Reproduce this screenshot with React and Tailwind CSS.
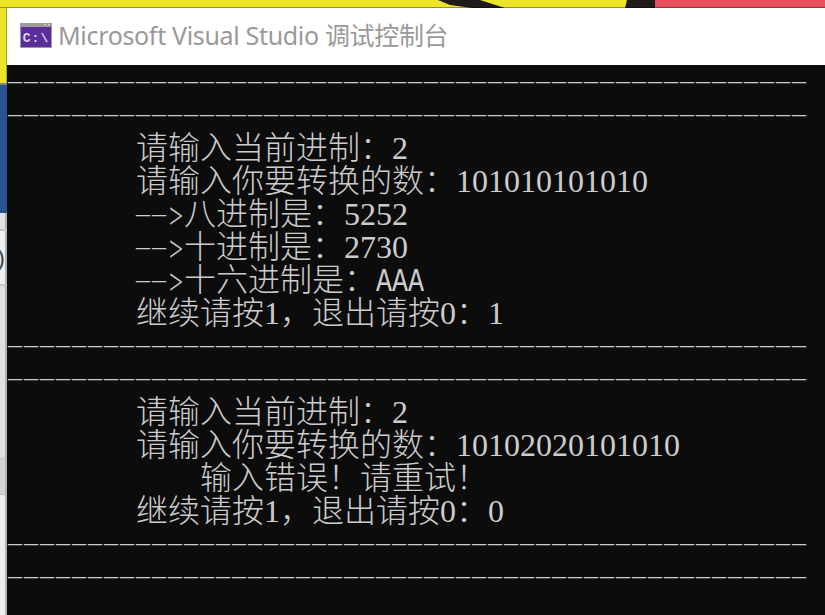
import React from "react";

const cjk = "font-['Liberation_Serif','Noto_Sans_CJK_SC',serif]";

// one row of the console, always 33px high
function Row({ children, indent }) {
    return (
        <div className={`h-[33px] leading-[35px] whitespace-pre text-[32px] font-light ${cjk} ${indent ? "pl-[128px]" : ""}`}>
            {children}
        </div>
    );
}

// dashes are a fixed 16px cell, as in the console font
function Dashes({ count }) {
    return (
        <span className="font-['Liberation_Serif',serif] text-[28px] tracking-[2px] font-normal">
            {"–".repeat(count)}
        </span>
    );
}

// the arrow head is taller and narrower than any installed font draws it
function Arrow() {
    return (
        <>
            <span className="inline-block w-[32px] leading-none relative -top-[3px]">
                <Dashes count={2} />
            </span>
            <span className="inline-block w-[16px] leading-none text-center font-['Liberation_Serif',serif] text-[25px] font-normal scale-y-[1.4] origin-center">
                &gt;
            </span>
        </>
    );
}

function Letters({ children }) {
    return (
        <span className="inline-block leading-none origin-[50%_70%] scale-y-125 font-['Liberation_Mono',monospace] text-[26.67px] font-normal">
            {children}
        </span>
    );
}

function Rule() {
    return (
        <div className={`h-[33px] leading-[27px] whitespace-pre text-[32px] ${cjk}`}>
            <Dashes count={50} />
        </div>
    );
}

function ConsoleIcon() {
    return (
        <svg width="32" height="25" viewBox="0 0 32 25" className="shrink-0">
            <rect width="32" height="25" fill="#9c9c9c" />
            <rect x="24" y="1" width="2" height="1" fill="#d0d0d0" />
            <rect x="28" y="1" width="2" height="1" fill="#d0d0d0" />
            <rect x="1" y="4" width="30" height="20" fill="#5b2d9a" />
            <text x="16" y="19" textAnchor="middle" fontFamily="Liberation Mono" fontWeight="700" fontSize="13" letterSpacing="1" fill="#dcd6ea">
                C:\
            </text>
        </svg>
    );
}

function Wallpaper() {
    return (
        <svg width="825" height="8" viewBox="0 0 825 8" className="block">
            <rect width="825" height="8" fill="#ede428" />
            <rect x="655" width="170" height="8" fill="#e8505a" />
            <polygon points="627,0 655,0 655,8 625,8" fill="#1f1b1b" />
            <polygon points="438,0 480,0 505,8 472,8 450,5" fill="#1f1b1b" />
            <rect y="7" width="825" height="1" fill="#000000" opacity="0.35" />
        </svg>
    );
}

function SideStrip() {
    return (
        <div className="w-[7px] shrink-0 flex flex-col h-[607px] overflow-hidden">
            <div className="h-[75px] bg-[#ede428] border-r border-[#a8a430]" />
            <div className="h-[2px] bg-[#85857a]" />
            <div className="h-[128px] bg-[#2b5290]" />
            <div className="h-[16px] bg-[#e2e2e2] border-r-2 border-[#b0b0b0]" />
            <div className="h-[2px] bg-[#c4c4c4]" />
            <div className="h-[53px] bg-[#f0f0f0] border-r-2 border-[#b0b0b0] flex justify-end items-center overflow-hidden">
                <span className="font-['Liberation_Sans',sans-serif] text-[24px] leading-none text-[#3c4654] whitespace-pre">:)</span>
            </div>
            <div className="h-[2px] bg-[#c4c4c4]" />
            <div className="h-[172px] bg-[#e0e0e0] border-r-2 border-[#b0b0b0]" />
            <div className="h-[37px] bg-[#d2d2d2] border-y border-[#c2c2c2] border-r-2 border-r-[#b0b0b0]" />
            <div className="flex-1 bg-[#eeeeee] border-r-2 border-[#b0b0b0]" />
        </div>
    );
}

export default function App() {
    return (
        <div className="w-[825px] h-[615px] overflow-hidden flex flex-col bg-[#0c0c0c]">
            <Wallpaper />
            <div className="flex flex-1 min-h-0">
                <SideStrip />
                <div className="flex-1 min-w-0 flex flex-col">
                    <div className="h-[57px] bg-white flex items-center gap-[6px] pl-[13px] pb-[2px] shrink-0">
                        <ConsoleIcon />
                        <span className="font-['Noto_Sans','Noto_Sans_CJK_SC',sans-serif] text-[25px] font-normal tracking-[-0.33px] text-[#999999] whitespace-pre">
                            Microsoft Visual Studio 调试控制台
                        </span>
                    </div>
                    <div className="flex-1 bg-[#0c0c0c] text-[#cccccc] pl-[1px]">
                        <Rule />
                        <Rule />
                        <Row indent>请输入当前进制：2</Row>
                        <Row indent>请输入你要转换的数：101010101010</Row>
                        <Row indent>
                            <Arrow />八进制是：5252
                        </Row>
                        <Row indent>
                            <Arrow />十进制是：2730
                        </Row>
                        <Row indent>
                            <Arrow />十六进制是：<Letters>AAA</Letters>
                        </Row>
                        <Row indent>继续请按1，退出请按0：1</Row>
                        <Rule />
                        <Rule />
                        <Row indent>请输入当前进制：2</Row>
                        <Row indent>请输入你要转换的数：10102020101010</Row>
                        <Row indent>
                            <span className="pl-[64px]">输入错误！请重试！</span>
                        </Row>
                        <Row indent>继续请按1，退出请按0：0</Row>
                        <Rule />
                        <Rule />
                    </div>
                </div>
            </div>
        </div>
    );
}
